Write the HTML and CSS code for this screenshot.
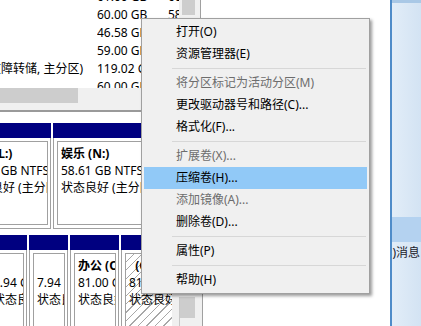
FILE: index.html
```
<!DOCTYPE html>
<html lang="zh-CN">
<head>
    <meta charset="UTF-8">
    <title>磁盘管理</title>
    <link rel="stylesheet" href="styles.css">
</head>
<body>
    <div class="desktop">
        <div class="diskmgmt">
            <div class="volume-pane">
                <div class="volume-list">
                    <div class="vrow"><span class="c-status"></span><span class="c-cap">61.00 GB</span><span class="c-free">60.87 GB</span></div>
                    <div class="vrow"><span class="c-status"></span><span class="c-cap">60.00 GB</span><span class="c-free">58.91 GB</span></div>
                    <div class="vrow"><span class="c-status"></span><span class="c-cap">46.58 GB</span><span class="c-free">45.20 GB</span></div>
                    <div class="vrow"><span class="c-status"></span><span class="c-cap">59.00 GB</span><span class="c-free">40.12 GB</span></div>
                    <div class="vrow"><span class="c-status"><span>状态良好 (启动, 页面文件, 故障转储, 主分区)</span></span><span class="c-cap">119.02 GB</span><span class="c-free">70.33 GB</span></div>
                    <div class="vrow"><span class="c-status"></span><span class="c-cap">60.00 GB</span><span class="c-free">59.80 GB</span></div>
                </div>
                <div class="vscroll"><div class="thumb"></div></div>
                <div class="hscroll"><div class="thumb"></div></div>
                <div class="corner"></div>
            </div>
            <div class="pane-gap"></div>
            <div class="splitter"></div>
            <div class="graph-pane">
                <div class="disks">
                    <div class="disk disk-1">
                        <div class="part p-docs">
                            <div class="bar"></div>
                            <div class="frame"><div class="box">
                                <b>文档 (L:)</b><span>59.00 GB NTFS</span><span>状态良好 (主分区)</span>
                            </div></div>
                        </div>
                        <div class="part p-fun">
                            <div class="bar"></div>
                            <div class="frame"><div class="box">
                                <b>娱乐 (N:)</b><span>58.61 GB NTFS</span><span>状态良好 (主分区)</span>
                            </div></div>
                        </div>
                    </div>
                    <div class="disk disk-2">
                        <div class="part p-a">
                            <div class="bar"></div>
                            <div class="frame"><div class="box">
                                <b>&nbsp;</b><span>5.94 GB NTFS</span><span>状态良好 (主分区)</span>
                            </div></div>
                        </div>
                        <div class="part p-b">
                            <div class="bar"></div>
                            <div class="frame"><div class="box">
                                <b>&nbsp;</b><span>7.94 GB NTFS</span><span>状态良好 (主分区)</span>
                            </div></div>
                        </div>
                        <div class="part p-office">
                            <div class="bar"></div>
                            <div class="frame"><div class="box">
                                <b>办公 (O:)</b><span>81.00 GB NTFS</span><span>状态良好 (主分区)</span>
                            </div></div>
                        </div>
                        <div class="part p-new">
                            <div class="bar"></div>
                            <div class="frame"><div class="box hatched">
                                <b class="pre">  (G:)</b><span>81.00 GB NTFS</span><span>状态良好 (主分区)</span>
                            </div></div>
                        </div>
                    </div>
                </div>
                <div class="gscroll"><div class="track"><div class="thumb"></div></div></div>
            </div>
        </div>

        <div class="backdrop"></div>

        <div class="explorer">
            <div class="exp-top"></div>
            <div class="exp-band"></div>
            <div class="exp-text"><span>(3)消息</span></div>
        </div>

        <ul class="menu">
            <li>打开(O)</li>
            <li>资源管理器(E)</li>
            <li class="sep"></li>
            <li class="disabled">将分区标记为活动分区(M)</li>
            <li>更改驱动器号和路径(C)...</li>
            <li>格式化(F)...</li>
            <li class="sep"></li>
            <li class="disabled">扩展卷(X)...</li>
            <li class="active">压缩卷(H)...</li>
            <li class="disabled">添加镜像(A)...</li>
            <li>删除卷(D)...</li>
            <li class="sep"></li>
            <li>属性(P)</li>
            <li class="sep"></li>
            <li>帮助(H)</li>
        </ul>
    </div>
</body>
</html>
```

FILE: styles.css
```
/* Disk management window behind a context menu */
body {
    margin: 0;
    font-family: "Noto Sans", "Noto Sans CJK SC", sans-serif;
    font-size: 12px;
    color: #000;
    background: #fff;
}
.desktop {
    position: relative;
    display: flex;
    width: 421px;
    height: 326px;
    overflow: hidden;
}

/* left window */
.diskmgmt {
    width: 203px;
    flex: none;
    display: flex;
    flex-direction: column;
    background: #fff;
}
.volume-pane {
    width: 201px;
    display: grid;
    grid-template-columns: 179px 21px;
    grid-template-rows: 88px 17px;
    border-right: 1px solid #a0a0a0;
    box-sizing: border-box;
}
.volume-list {
    overflow: hidden;
    background: #fff;
}
.vrow {
    display: grid;
    grid-template-columns: 97px 71px 14px;
    height: 18px;
    line-height: 18px;
    white-space: nowrap;
}
.vrow:first-child {
    margin-top: -12px;
}
.c-status {
    display: flex;
    justify-content: flex-end;
    overflow: hidden;
    padding-right: 14px;
}
.c-cap, .c-free {
    overflow: hidden;
}
.vscroll {
    background: #f0f0f0;
}
.vscroll .thumb {
    margin-left: 3px;
    width: 13px;
    height: 15px;
    background: #cdcdcd;
}
.hscroll {
    background: #f0f0f0;
}
.hscroll .thumb {
    width: 78px;
    height: 15px;
    background: #cdcdcd;
}
.corner {
    background: #f0f0f0;
}
.pane-gap {
    width: 201px;
    height: 5px;
    background: #f0f0f0;
}
.splitter {
    height: 2px;
    background: #9a9a9a;
}

.graph-pane {
    flex: 1;
    display: flex;
    min-height: 0;
}
.disks {
    width: 172px;
    flex: none;
    overflow: hidden;
    padding-top: 11px;
}
.disk {
    display: flex;
    height: 106px;
    margin-bottom: 6px;
}
.disk-1 {
    margin-left: -41px;
}
.disk-2 {
    margin-left: -15px;
}
.part {
    flex: none;
    display: flex;
    flex-direction: column;
    margin-right: 2px;
}
.p-docs { width: 92px; }
.p-fun { width: 200px; }
.p-a { width: 42px; }
.p-b { width: 39px; }
.p-office { width: 49px; }
.p-new { width: 140px; }
.bar {
    height: 15px;
    background: #000080;
}
.frame {
    flex: 1;
    min-height: 0;
    border: 1px solid #a0a0a0;
    border-top: 0;
    padding: 3px 2px 3px 3px;
    background: #fff;
}
.box {
    height: 100%;
    box-sizing: border-box;
    border: 1px solid #a0a0a0;
    padding: 3px;
    display: flex;
    flex-direction: column;
    overflow: hidden;
    white-space: nowrap;
    line-height: 17px;
}
.box b {
    font-weight: 700;
}
.pre {
    white-space: pre;
}
.hatched {
    background: repeating-linear-gradient(135deg, #fff 0 5px, #a8a8a8 5px 6px);
}
.gscroll {
    flex: 1;
    background: #f0f0f0;
    padding-left: 7px;
    border-right: 1px solid #a0a0a0;
}
.gscroll .track {
    height: 100%;
    border-left: 1px solid #c8c8c8;
}
.gscroll .thumb {
    margin-top: 185px;
    width: 15px;
    height: 21px;
    background: #cdcdcd;
}

/* empty area between windows */
.backdrop {
    flex: 1;
    background: #fff;
}

/* right window */
.explorer {
    width: 31px;
    flex: none;
    border-left: 2px solid #4f8cc9;
    box-sizing: border-box;
    overflow: hidden;
    background:
        radial-gradient(circle at 470px 120px, transparent 86px, rgba(255, 255, 255, 0.45) 87px, rgba(255, 255, 255, 0.45) 89px, transparent 90px),
        linear-gradient(to right, #e2edf8, #d3e3f3);
}
.exp-top {
    height: 3px;
    background: #a9c8e6;
}
.exp-band {
    height: 25px;
    margin-top: 214px;
    background: #b4d2f0;
}
.exp-text {
    display: flex;
    justify-content: flex-end;
    margin-top: 2px;
    padding-right: 1px;
    line-height: 17px;
    white-space: nowrap;
    color: #1a1a2a;
}

/* context menu */
.menu {
    position: absolute;
    left: 141px;
    top: 18px;
    width: 229px;
    box-sizing: border-box;
    margin: 0;
    padding: 2px;
    list-style: none;
    background: #f0f0f0;
    border: 1px solid #a0a0a0;
    box-shadow: 2px 2px 3px rgba(0, 0, 0, 0.4);
}
.menu li {
    height: 22px;
    line-height: 22px;
    padding-left: 32px;
    white-space: nowrap;
}
.menu li.disabled {
    color: #6d6d6d;
}
.menu li.active {
    background: #91c9f7;
}
.menu li.sep {
    height: 1px;
    margin: 3px 1px 3px 28px;
    padding: 0;
    background: #d7d7d7;
}
```
